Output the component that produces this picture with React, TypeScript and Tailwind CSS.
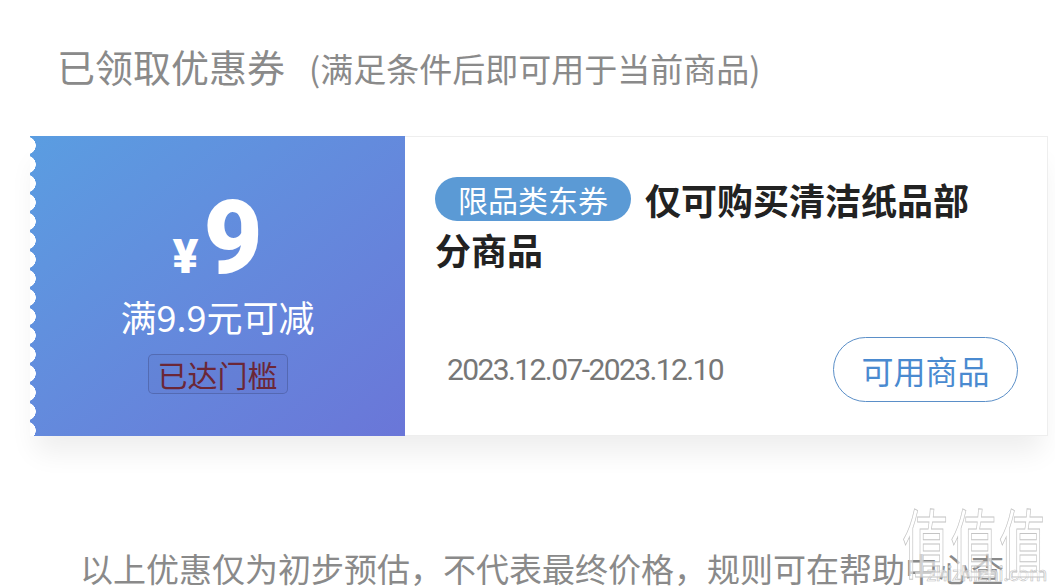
import React from "react";

export default function App() {
  return (
    <div className="relative w-[1055px] h-[587px] overflow-hidden bg-white font-['Noto_Sans_CJK_SC','Noto_Sans',sans-serif]">
      <div className="flex items-baseline pl-[57px] pt-[42px]">
        <span className="text-[38px] leading-[48px] text-[#8a8a8a]">已领取优惠券</span>
        <span className="ml-[24px] text-[33px] leading-[48px] text-[#8a8a8a]">(满足条件后即可用于当前商品)</span>
      </div>

      <div className="ml-[30px] mr-[7px] mt-[44px] flex h-[300px] shadow-[0_22px_26px_-6px_rgba(0,0,0,0.07)]">
        <div className="relative flex w-[375px] shrink-0 flex-col items-center bg-linear-to-br from-[#5a9de1] to-[#6a76d8] pt-[58px]">
          <div className="absolute left-0 top-0 bottom-0 w-[8px] bg-[radial-gradient(circle_at_-3px_50%,#ffffff_8.5px,transparent_9px)] bg-[length:8px_19px]" />
          <div className="flex items-baseline text-white font-['Roboto','Noto_Sans',sans-serif] font-bold">
            <span className="text-[48px] leading-none mr-[5px] font-black">¥</span>
            <span className="text-[102px] leading-[88px] font-black">9</span>
          </div>
          <div className="mt-[12px] text-[36px] leading-[44px] text-white">满9.9元可减</div>
          <div className="mt-[16px] h-[40px] rounded-[5px] border border-[#4a5a9a]/60 bg-[#5560b0]/10 px-[9px] text-[30px] leading-[38px] text-[#6b2737]">
            已达门槛
          </div>
        </div>

        <div className="flex flex-1 flex-col border-y border-r border-[#eeeeee] bg-white">
          <div className="pl-[30px] pr-[60px] pt-[37px] text-[36px] font-bold leading-[50px] text-[#222222]">
            <span className="mr-[14px] inline-flex h-[44px] items-center rounded-full bg-[#5b9ad5] px-[23px] align-[3px] text-[30px] font-normal leading-none text-white">
              限品类东券
            </span>
            仅可购买清洁纸品部分商品
          </div>
          <div className="mt-auto flex items-center justify-between pb-[33px] pl-[42px] pr-[29px]">
            <span className="font-['Roboto','Noto_Sans',sans-serif] text-[30px] tracking-[-1.6px] text-[#777777]">
              2023.12.07-2023.12.10
            </span>
            <span className="flex h-[65px] w-[185px] items-center justify-center rounded-full border border-[#5b8fc8] text-[32px] text-[#4a8ad0]">
              可用商品
            </span>
          </div>
        </div>
      </div>

      <p className="mt-[110px] w-[1020px] pl-[80px] text-[33px] leading-[44px] text-[#8a8a8a]">
        以上优惠仅为初步预估，不代表最终价格，规则可在帮助中心查看。
      </p>

      <div className="pointer-events-none absolute right-[8px] bottom-[4px] flex flex-col items-end">
        <span className="inline-block origin-right scale-x-[0.62] text-[76px] leading-[78px] tracking-[2px] text-white/60 [-webkit-text-stroke:1px_#c4c4c4]">值值值</span>
        <span className="-mt-[16px] text-[20px] leading-[20px] tracking-[-0.5px] text-white/70 [-webkit-text-stroke:0.6px_#bdbdbd]">zhizhizhi.com</span>
      </div>
    </div>
  );
}
